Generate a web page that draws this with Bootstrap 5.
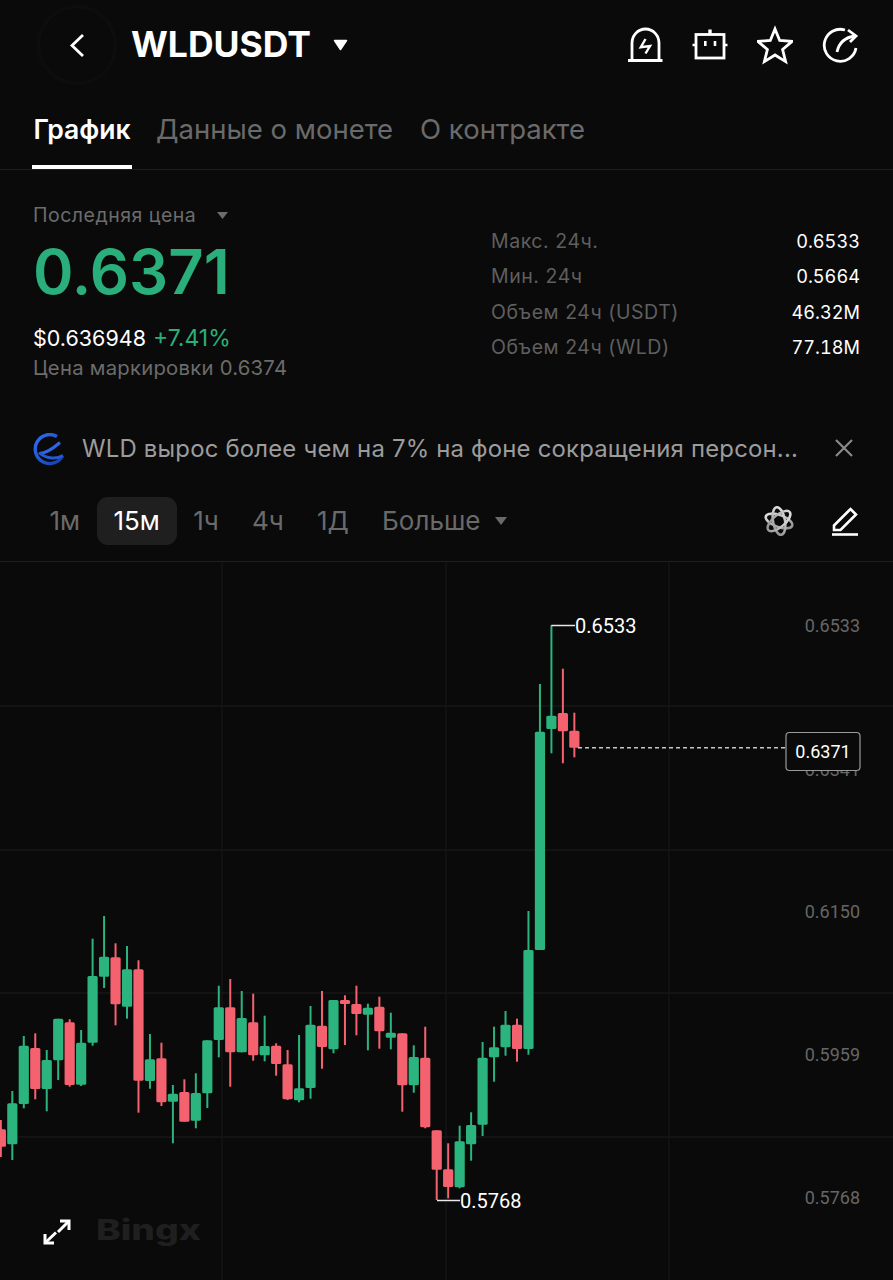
<!DOCTYPE html>
<html lang="ru">
<head>
  <meta charset="UTF-8" />
  <title>WLDUSDT</title>
  <meta name="viewport" content="width=device-width, initial-scale=1.0" />
  <link href="https://cdn.jsdelivr.net/npm/bootstrap@5.3.2/dist/css/bootstrap.min.css" rel="stylesheet" />
  <style>
    body {
      font-family: Inter, "Noto Sans", sans-serif;
      background-color: #0a0a0a;
      color: #fff;
      height: 1280px;
      overflow: hidden;
    }

    .top-bar { height: 90px; padding: 0 35px 0 40px; }
    .back-btn {
      width: 74px;
      height: 74px;
      border-radius: 50%;
      box-shadow: 0 0 8px rgba(255, 255, 255, 0.05);
    }
    .pair-name { font-size: 35.5px; font-weight: 700; margin-left: 17px; margin-right: 22px; }
    .tool-icons { gap: 29px; }

    .tab-row { height: 80px; padding-left: 32px; border-bottom: 1px solid #1e1e1e; gap: 24px; }
    .tab-link { font-size: 27.5px; color: #6a6a6a; padding-top: 19px; line-height: 40px; height: 79px; }
    .tab-link.on { color: #fff; font-size: 26.5px; font-weight: 600; width: 100px; text-align: center; border-bottom: 4px solid #fff; }
    .tab-link.last-tab { margin-left: 3px; }

    .stats-block { padding: 32px 33px 0; height: 245px; }
    .stat-left { width: 458px; }
    .last-label { font-size: 19.5px; color: #6c6c6c; line-height: 26px; letter-spacing: 0.5px; }
    .last-label svg { margin-left: 20px; }
    .big-price { font-size: 61.5px; font-weight: 600; color: #2aae7b; line-height: 80px; margin-top: 4px; }
    .fiat-line { font-size: 21.5px; line-height: 28px; margin-top: 12px; }
    .fiat-line span { color: #2aae7b; font-size: 23px; margin-left: 1px; }
    .mark-line { font-size: 20.3px; color: #6c6c6c; line-height: 30px; letter-spacing: 0.25px; margin-top: 1px; }
    .stat-right { padding-top: 22px; }
    .stat-row { font-size: 18.2px; height: 35.3px; align-items: center; font-variant-numeric: tabular-nums; }
    .stat-row .lbl { color: #5f5f5f; font-size: 19.5px; letter-spacing: 0.55px; font-variant-numeric: normal; }

    .news-row { height: 69px; padding: 0 32px; }
    .news-text { font-size: 23.9px; color: #9c9c9c; margin-left: 16px; width: 716px; letter-spacing: 0.2px; white-space: nowrap; padding-bottom: 2px; }
    .news-close { margin-left: 36px; margin-bottom: 3px; }

    .range-row { height: 78px; padding: 0 34px 4px 32.8px; border-bottom: 1px solid #1e1e1e; }
    .range-btn { font-size: 26px; color: #6a6a6a; padding: 0 16.6px; height: 48px; line-height: 48px; border-radius: 11px; }
    .range-btn.on { color: #fff; background-color: #1f1f1f; padding: 0; width: 80px; text-align: center; }
    .more-caret { margin-left: 6px; }
    .chart-icons { gap: 35px; }

    .chart-wrap { position: relative; height: 718px; }
    .chart-wrap svg.plot { display: block; }
    .expand-icon { position: absolute; left: 43px; bottom: 34px; }
    .water-mark {
      position: absolute;
      left: 96px;
      bottom: 30px;
      font-weight: 800;
      font-size: 28px;
      line-height: 40px;
      color: #1f1f1f;
      transform: scaleX(1.33);
      transform-origin: left center;
    }
    .axis-txt { font-family: Roboto, sans-serif; font-size: 18px; fill: #666; text-anchor: end; }
    .mark-txt { font-family: Roboto, sans-serif; font-size: 20px; fill: #fff; }
  </style>
</head>
<body>
  <!-- Header -->
  <div class="top-bar d-flex align-items-center">
    <div class="back-btn d-flex align-items-center justify-content-center">
      <svg width="16" height="24" viewBox="0 0 16 24"><path d="M14 2 L3 12.5 L14 23" fill="none" stroke="#fff" stroke-width="2.8"/></svg>
    </div>
    <div class="pair-name">WLDUSDT</div>
    <svg width="15" height="12" viewBox="0 0 15 12"><path d="M1.5 1.5 H13.5 L7.5 10.5 Z" fill="#fff" stroke="#fff" stroke-width="1.5" stroke-linejoin="round"/></svg>
    <div class="tool-icons d-flex ms-auto">
      <svg width="36" height="40" viewBox="627 25 36 40" fill="none" stroke="#fff" stroke-width="2.8">
        <path d="M632 60 V43 a13.5 14 0 0 1 27 0 V60"/><path d="M628 60.5 H662.5"/>
        <path d="M645.5 39 L640.8 47.2 L650 46 L645.5 53.5" stroke-width="2.4"/>
      </svg>
      <svg width="36" height="40" viewBox="692 25 36 40" fill="none" stroke="#fff" stroke-width="2.8">
        <rect x="696" y="34.5" width="28" height="23.5"/>
        <path d="M710 29.5 V34" stroke-width="3.4"/><path d="M692.5 45 H696 M724 45 H727.5" stroke-width="2.6"/>
        <path d="M705.3 41 V46 M715 41 V46" stroke-width="2.6"/>
      </svg>
      <svg width="36" height="40" viewBox="757 25 36 40" fill="none" stroke="#fff" stroke-width="2.8">
        <polygon points="775,29 779.7,40.5 792.1,41.4 782.6,49.5 785.6,61.6 775,55 764.4,61.6 767.4,49.5 757.9,41.4 770.3,40.5"/>
      </svg>
      <svg width="36" height="40" viewBox="822 25 36 40" fill="none" stroke="#fff" stroke-width="2.8">
        <path d="M845 30 A16 16 0 1 0 856 48"/>
        <path d="M837 52 Q840 38 855 36"/><path d="M848 30 L856 36 L850 42"/>
      </svg>
    </div>
  </div>

  <!-- Tabs -->
  <div class="tab-row d-flex">
    <div class="tab-link on">График</div>
    <div class="tab-link">Данные о монете</div>
    <div class="tab-link last-tab">О контракте</div>
  </div>

  <!-- Price block -->
  <div class="stats-block d-flex">
    <div class="stat-left">
      <div class="last-label d-flex align-items-center">Последняя цена
        <svg width="13" height="9" viewBox="0 0 13 9"><path d="M1 1 H12 L6.5 8 Z" fill="#6c6c6c"/></svg>
      </div>
      <div class="big-price">0.6371</div>
      <div class="fiat-line">$0.636948 <span>+7.41%</span></div>
      <div class="mark-line">Цена маркировки 0.6374</div>
    </div>
    <div class="stat-right flex-grow-1">
      <div class="stat-row d-flex justify-content-between"><span class="lbl">Макс. 24ч.</span><span>0.6533</span></div>
      <div class="stat-row d-flex justify-content-between"><span class="lbl">Мин. 24ч</span><span>0.5664</span></div>
      <div class="stat-row d-flex justify-content-between"><span class="lbl">Объем 24ч (USDT)</span><span>46.32M</span></div>
      <div class="stat-row d-flex justify-content-between"><span class="lbl">Объем 24ч (WLD)</span><span>77.18M</span></div>
    </div>
  </div>

  <!-- News -->
  <div class="news-row d-flex align-items-center">
    <svg width="34" height="34" viewBox="0 0 34 34" fill="none">
      <defs>
        <linearGradient id="wldBlue" x1="0" y1="0" x2="1" y2="1">
          <stop offset="0" stop-color="#2d6ef5"/>
          <stop offset="1" stop-color="#163fa8"/>
        </linearGradient>
      </defs>
      <path d="M25 3.5 A14.5 14.5 0 1 0 30.5 23" stroke="url(#wldBlue)" stroke-width="3.4"/>
      <path d="M28 9.5 C21 15.5 14 20.5 7.5 20.5" stroke="#2d66ea" stroke-width="3"/>
      <path d="M7 19.5 C13 25 23 27 31 22.5" stroke="#2458d4" stroke-width="3"/>
    </svg>
    <div class="news-text">WLD вырос более чем на 7% на фоне сокращения персон...</div>
    <svg class="news-close" width="20" height="20" viewBox="0 0 20 20"><path d="M2 2 L18 18 M18 2 L2 18" stroke="#8a8a8a" stroke-width="2.2"/></svg>
  </div>

  <!-- Timeframes -->
  <div class="range-row d-flex align-items-center">
    <div class="range-btn">1м</div>
    <div class="range-btn on">15м</div>
    <div class="range-btn">1ч</div>
    <div class="range-btn">4ч</div>
    <div class="range-btn">1Д</div>
    <div class="range-btn d-flex align-items-center gap-2">Больше
      <svg class="more-caret" width="14" height="10" viewBox="0 0 14 10"><path d="M1 1 H13 L7 9 Z" fill="#6a6a6a"/></svg>
    </div>
    <div class="chart-icons d-flex align-items-center ms-auto">
      <svg width="34" height="34" viewBox="0 0 34 34" fill="none" stroke="url(#atomGrey)" stroke-width="2.5">
        <defs>
          <linearGradient id="atomGrey" gradientUnits="userSpaceOnUse" x1="4" y1="6" x2="30" y2="30">
            <stop offset="0" stop-color="#f0f0f0"/>
            <stop offset="1" stop-color="#808080"/>
          </linearGradient>
        </defs>
        <ellipse cx="17" cy="17" rx="14" ry="6" transform="rotate(20 17 17)"/>
        <ellipse cx="17" cy="17" rx="14" ry="6" transform="rotate(80 17 17)"/>
        <ellipse cx="17" cy="17" rx="14" ry="6" transform="rotate(140 17 17)"/>
      </svg>
      <svg width="28" height="30" viewBox="0 0 28 30" fill="none" stroke="#fff" stroke-width="2.6">
        <path d="M3 19.5 L19.5 3 L25 8.5 L9.5 24 H3 Z"/><path d="M1 28.5 H27"/>
      </svg>
    </div>
  </div>

  <!-- Chart -->
  <div class="chart-wrap">
    <svg class="plot" id="plot" width="893" height="718" viewBox="0 562 893 718"></svg>
    <svg class="expand-icon" width="28" height="28" viewBox="43 1217 28 28" fill="none" stroke="#fff" stroke-width="3">
      <path d="M60 1220 H69 V1229"/><path d="M69 1220 L58 1231"/>
      <path d="M45 1233 V1242 H54"/><path d="M45 1242 L56 1231.5"/>
    </svg>
    <div class="water-mark">Bingx</div>
  </div>

  <script src="https://cdn.jsdelivr.net/npm/bootstrap@5.3.2/dist/js/bootstrap.bundle.min.js"></script>
  <script>
    const svg = document.getElementById("plot");
    const GREEN = "#2bb47e";
    const RED = "#f5626f";

    // candle y values: wick top, body top, body bottom, wick bottom
    const candles = [
      ["r", 1120, 1129.3, 1146.7, 1157],
      ["g", 1091, 1103.3, 1144.3, 1160],
      ["g", 1036, 1045.7, 1104, 1108.3],
      ["r", 1033.3, 1048, 1089, 1099.3],
      ["g", 1050, 1060, 1089, 1111.3],
      ["g", 1018.7, 1018.7, 1060.3, 1080],
      ["r", 1019.3, 1022.3, 1085, 1086.7],
      ["g", 1030, 1042.7, 1084.7, 1086],
      ["g", 938.7, 976, 1042.7, 1045.7],
      ["g", 916, 956.7, 976.7, 988],
      ["r", 943.3, 957.3, 1004.3, 1025.3],
      ["g", 946, 969.3, 1006.7, 1018.7],
      ["r", 960.3, 969.3, 1080.7, 1112.7],
      ["g", 1034, 1059.3, 1081, 1088.7],
      ["r", 1042.7, 1058.3, 1102.3, 1106],
      ["g", 1085, 1093.7, 1101.7, 1143.3],
      ["r", 1079.3, 1092, 1121.7, 1121.7],
      ["g", 1073.3, 1093, 1120.7, 1128.3],
      ["g", 1040.3, 1040.3, 1093.3, 1108],
      ["g", 985.7, 1007.3, 1040, 1057.3],
      ["r", 979, 1007.3, 1052.3, 1086.7],
      ["g", 991, 1018, 1052.3, 1052.3],
      ["r", 993.7, 1022.3, 1055.3, 1060.7],
      ["g", 1015.7, 1046, 1055.3, 1061.3],
      ["r", 1043.3, 1045.7, 1064, 1075.7],
      ["r", 1050, 1064.3, 1099.3, 1100],
      ["g", 1035, 1088.3, 1100.3, 1102.3],
      ["g", 1006, 1024.7, 1088, 1098.7],
      ["r", 991, 1025.7, 1047, 1068.7],
      ["g", 1000, 1000, 1049.3, 1053.3],
      ["r", 995.3, 1000, 1004, 1045],
      ["r", 985.7, 1004, 1014, 1035.3],
      ["g", 1003.7, 1007.7, 1014.7, 1050.3],
      ["r", 996.7, 1006.7, 1031.3, 1048.7],
      ["g", 1012.7, 1032.7, 1037.7, 1049.3],
      ["r", 1033.3, 1033.3, 1085.3, 1111.7],
      ["g", 1045.3, 1057, 1085.3, 1092.7],
      ["r", 1026.7, 1057.7, 1127.3, 1128.3],
      ["r", 1130.3, 1130.3, 1169.7, 1200],
      ["r", 1143.3, 1169.3, 1187, 1198.3],
      ["g", 1125.7, 1141.3, 1187.3, 1188.3],
      ["g", 1112.3, 1125, 1144.3, 1160.7],
      ["g", 1042, 1057.7, 1124.7, 1136],
      ["g", 1026.7, 1047.3, 1057.3, 1081.7],
      ["g", 1011, 1024.7, 1047.3, 1055.7],
      ["r", 1018.7, 1024.7, 1049, 1061.7],
      ["g", 911, 950, 1049, 1054.7],
      ["g", 684, 731.7, 950, 950],
      ["g", 625.3, 715.7, 729, 753.3],
      ["r", 668.7, 713, 731.3, 763.3],
      ["r", 712.7, 730.7, 747.7, 757.3]
    ];

    let html = "";

    // grid
    [706, 850, 993, 1137].forEach(y => {
      html += `<path d="M0 ${y} H893" stroke="#1c1c1c" stroke-width="1.2"/>`;
    });
    [222, 446, 669].forEach(x => {
      html += `<path d="M${x} 562 V1280" stroke="#171717" stroke-width="1.2"/>`;
    });

    // candles
    candles.forEach((c, i) => {
      const x = 0.85 + 11.47 * i;
      const col = c[0] === "g" ? GREEN : RED;
      html += `<rect x="${x - 1}" y="${c[1]}" width="2" height="${c[4] - c[1]}" fill="${col}"/>`;
      html += `<rect x="${x - 5.1}" y="${c[2]}" width="10.2" height="${c[3] - c[2]}" rx="1.5" fill="${col}"/>`;
    });

    // axis labels
    [[625, "0.6533"], [769, "0.6341"], [911, "0.6150"], [1054, "0.5959"], [1197, "0.5768"]].forEach(a => {
      html += `<text class="axis-txt" x="860" y="${a[0] + 7}">${a[1]}</text>`;
    });

    // high / low marks
    html += `<path d="M551.3 625.5 H575" stroke="#e8e8e8" stroke-width="1.5"/>`;
    html += `<text class="mark-txt" x="575" y="633">0.6533</text>`;
    html += `<path d="M437 1200.5 H460" stroke="#e8e8e8" stroke-width="1.5"/>`;
    html += `<text class="mark-txt" x="460" y="1208">0.5768</text>`;

    // last price line and box
    html += `<path d="M578 747.7 H786" stroke="#c8c8c8" stroke-width="1.4" stroke-dasharray="4 3"/>`;
    html += `<rect x="786" y="732.5" width="74" height="38" rx="3.5" fill="#0a0a0a" stroke="#9a9a9a" stroke-width="1.2"/>`;
    html += `<text x="823" y="757.5" text-anchor="middle" font-family="Roboto, sans-serif" font-size="18" fill="#fff">0.6371</text>`;

    svg.innerHTML = html;
  </script>
</body>
</html>
